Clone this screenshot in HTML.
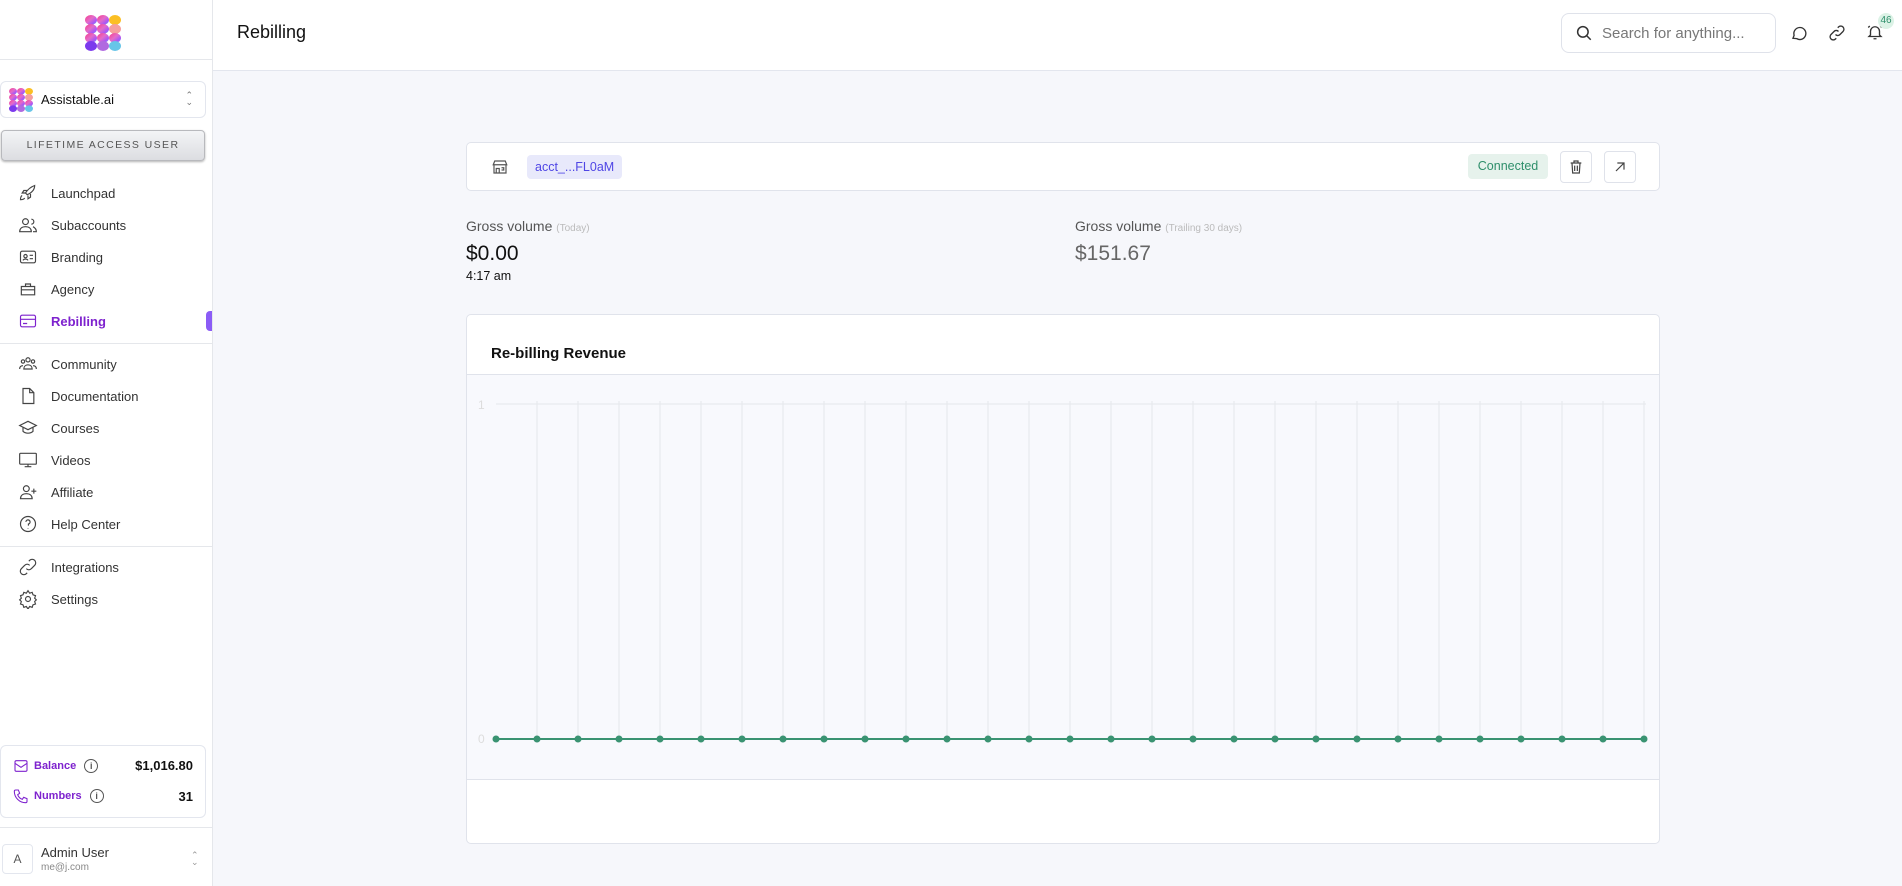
<!DOCTYPE html>
<html><head><meta charset="utf-8"><style>
*{box-sizing:border-box;margin:0;padding:0}
html,body{width:1902px;height:886px;overflow:hidden}
body{font-family:"Liberation Sans",sans-serif;background:#f6f7fb;color:#111;position:relative}
.side{position:absolute;left:0;top:0;width:213px;height:886px;background:#fff;border-right:1px solid #e5e7eb}
.hdr{position:absolute;left:213px;top:0;right:0;height:71px;background:#fff;border-bottom:1px solid #e3e6ee}
.item{position:absolute;left:18px;display:flex;align-items:center;font-size:13px;color:#333}
.item svg{width:20px;height:20px;margin-right:13px;stroke:#444;fill:none;stroke-width:1.4}
.sep{position:absolute;left:0;width:212px;height:1px;background:#e5e7eb}
.abs{position:absolute}
</style></head><body>
<svg width="0" height="0" style="position:absolute"><defs>
<linearGradient id="g" x1="0" y1="0" x2="1" y2="1"><stop offset="0" stop-color="#f43f8e"/><stop offset=".45" stop-color="#e56bc8"/><stop offset=".75" stop-color="#a855f7"/><stop offset="1" stop-color="#67c5e8"/></linearGradient>
<g id="logo"><g fill="url(#g)">
<ellipse cx="6" cy="5" rx="6" ry="5"/><ellipse cx="18" cy="5" rx="6" ry="5"/><ellipse cx="30" cy="5" rx="6" ry="5" fill="#fbbf24"/>
<ellipse cx="6" cy="14" rx="6" ry="5"/><ellipse cx="18" cy="14" rx="6" ry="5"/><ellipse cx="30" cy="14" rx="6" ry="5" fill="#f59e9e"/>
<ellipse cx="6" cy="23" rx="6" ry="5"/><ellipse cx="18" cy="23" rx="6" ry="5"/><ellipse cx="30" cy="23" rx="6" ry="5"/>
<ellipse cx="6" cy="31" rx="6" ry="5" fill="#7c3aed"/><ellipse cx="18" cy="31" rx="6" ry="5" fill="#b06ae0"/><ellipse cx="30" cy="31" rx="6" ry="5" fill="#67c5e8"/></g></g>
</defs></svg>
<div class="side">
 <svg class="abs" style="left:85px;top:15px" width="36" height="36" viewBox="0 0 36 36"><use href="#logo"/></svg>
 <div class="sep" style="top:59px"></div>
 <div class="abs" style="left:0;top:81px;width:206px;height:37px;border:1px solid #e3e6ee;border-radius:6px;display:flex;align-items:center;font-size:13px">
  <svg style="margin:0 8px 0 8px" width="24" height="24" viewBox="0 0 36 36"><use href="#logo"/></svg>
  Assistable.ai<span style="position:absolute;right:12px;top:10px;color:#777;font-size:9px;line-height:7px">⌃<br>⌄</span></div>
 <div class="abs" style="left:1px;top:130px;width:204px;height:31px;border-radius:4px;background:linear-gradient(#f3f4f6,#dcdde1);border:1px solid #b8b9bd;box-shadow:0 1px 2px rgba(0,0,0,.3);font-size:10.5px;letter-spacing:1.4px;color:#555;text-align:center;line-height:29px">LIFETIME ACCESS USER</div>

 <div class="item" style="top:183px"><svg viewBox="0 0 24 24"><path d="M5 15c-2 1-2 5-2 5s4 0 5-2M9 12a22 22 0 0 1 11-9c0 4-2 8-9 11zM9 12l-4 0 2-3h4M12 15v4l3-2v-4"/></svg>Launchpad</div>
 <div class="item" style="top:215px"><svg viewBox="0 0 24 24"><circle cx="9" cy="8" r="3.5"/><path d="M2 20c0-4 3-6 7-6s7 2 7 6zM16 5a3 3 0 1 1 0 6M18 14c2 1 4 3 4 6h-4"/></svg>Subaccounts</div>
 <div class="item" style="top:247px"><svg viewBox="0 0 24 24"><rect x="3" y="5" width="18" height="14" rx="2"/><circle cx="9" cy="11" r="2"/><path d="M6 16c1-2 5-2 6 0M14 10h4M14 14h4"/></svg>Branding</div>
 <div class="item" style="top:279px"><svg viewBox="0 0 24 24"><path d="M4 9h16v10H4zM9 9V6h6v3M4 13h16"/></svg>Agency</div>
 <div class="item" style="top:311px;color:#7e22ce;font-weight:bold"><svg viewBox="0 0 24 24" style="stroke:#7e22ce"><rect x="3" y="5" width="18" height="14" rx="2"/><path d="M3 10h18M6 15h5"/></svg>Rebilling</div>
 <div class="abs" style="left:206px;top:311px;width:6px;height:20px;border-radius:4px 0 0 4px;background:#8b5cf6"></div>
 <div class="sep" style="top:343px"></div>
 <div class="item" style="top:354px"><svg viewBox="0 0 24 24"><circle cx="12" cy="7" r="2.5"/><circle cx="6" cy="9" r="2"/><circle cx="18" cy="9" r="2"/><path d="M7 18c0-3 2-5 5-5s5 2 5 5zM2 18c0-2 1-4 4-4M22 18c0-2-1-4-4-4"/></svg>Community</div>
 <div class="item" style="top:386px"><svg viewBox="0 0 24 24"><path d="M6 3h8l5 5v13H6zM14 3v5h5"/></svg>Documentation</div>
 <div class="item" style="top:418px"><svg viewBox="0 0 24 24"><path d="M2 9l10-5 10 5-10 5zM6 11v5c3 3 9 3 12 0v-5"/></svg>Courses</div>
 <div class="item" style="top:450px"><svg viewBox="0 0 24 24"><rect x="2" y="4" width="20" height="13" rx="1"/><path d="M8 20h8M12 17v3"/></svg>Videos</div>
 <div class="item" style="top:482px"><svg viewBox="0 0 24 24"><circle cx="10" cy="8" r="3.5"/><path d="M3 20c0-4 3-6 7-6s7 2 7 6zM19 8v6M16 11h6"/></svg>Affiliate</div>
 <div class="item" style="top:514px"><svg viewBox="0 0 24 24"><circle cx="12" cy="12" r="9"/><path d="M9.5 9.5a2.5 2.5 0 1 1 3 2.5v2M12 17v.5"/></svg>Help Center</div>
 <div class="sep" style="top:546px"></div>
 <div class="item" style="top:557px"><svg viewBox="0 0 24 24"><path d="M10 14a4 4 0 0 0 6 0l4-4a4 4 0 0 0-6-6l-1 1M14 10a4 4 0 0 0-6 0l-4 4a4 4 0 0 0 6 6l1-1"/></svg>Integrations</div>
 <div class="item" style="top:589px"><svg viewBox="0 0 24 24"><circle cx="12" cy="12" r="3"/><path d="M12 2l2 3 3-1 1 3 3 1-1 3 2 2-2 2 1 3-3 1-1 3-3-1-2 3-2-3-3 1-1-3-3-1 1-3-2-2 2-2-1-3 3-1 1-3 3 1z"/></svg>Settings</div>

 <div class="abs" style="left:0;top:745px;width:206px;height:73px;border:1px solid #e3e6ee;border-radius:6px;font-size:11px;font-weight:bold;color:#7e22ce">
  <div class="abs" style="left:12px;top:12px;display:flex;align-items:center"><svg width="16" height="16" viewBox="0 0 24 24" fill="none" stroke="#7e22ce" stroke-width="1.6" style="margin-right:5px"><rect x="3" y="4" width="18" height="16" rx="2"/><path d="M3 8l9 6 9-6"/></svg>Balance <span style="display:inline-block;width:14px;height:14px;border:1px solid #555;border-radius:50%;color:#555;font-size:9px;text-align:center;line-height:12px;margin-left:8px">i</span></div>
  <div class="abs" style="right:12px;top:12px;color:#111;font-size:13px">$1,016.80</div>
  <div class="abs" style="left:12px;top:42px;display:flex;align-items:center"><svg width="16" height="16" viewBox="0 0 24 24" fill="none" stroke="#7e22ce" stroke-width="1.6" style="margin-right:5px"><path d="M4 3h4l2 5-3 2a11 11 0 0 0 7 7l2-3 5 2v4a2 2 0 0 1-2 2A17 17 0 0 1 2 5a2 2 0 0 1 2-2"/></svg>Numbers <span style="display:inline-block;width:14px;height:14px;border:1px solid #555;border-radius:50%;color:#555;font-size:9px;text-align:center;line-height:12px;margin-left:8px">i</span></div>
  <div class="abs" style="right:12px;top:43px;color:#111;font-size:13px">31</div>
 </div>
 <div class="sep" style="top:827px"></div>
 <div class="abs" style="left:2px;top:844px;width:31px;height:30px;border:1px solid #e3e6ee;border-radius:4px;font-size:12px;color:#555;text-align:center;line-height:28px">A</div>
 <div class="abs" style="left:41px;top:845px;font-size:13px;color:#333">Admin User</div>
 <div class="abs" style="left:41px;top:862px;font-size:10px;color:#888">me@j.com</div>
 <div class="abs" style="left:191px;top:852px;font-size:9px;color:#999;line-height:7px">⌃<br>⌄</div>
</div>

<div class="hdr">
 <div class="abs" style="left:24px;top:22px;font-size:18px;color:#111">Rebilling</div>
 <div class="abs" style="left:1348px;top:13px;width:215px;height:40px;border:1px solid #dfe2ea;border-radius:8px;display:flex;align-items:center;font-size:15px;color:#777">
  <svg width="18" height="18" viewBox="0 0 24 24" fill="none" stroke="#333" stroke-width="2" style="margin:0 9px 0 13px"><circle cx="10.5" cy="10.5" r="7"/><path d="M16 16l5 5"/></svg>Search for anything...</div>
 <svg class="abs" style="left:1577px;top:24px" width="18" height="18" viewBox="0 0 24 24" fill="none" stroke="#333" stroke-width="1.8"><path d="M4 19l1.5-4A8 8 0 1 1 9 19.5z"/></svg>
 <svg class="abs" style="left:1615px;top:24px" width="18" height="18" viewBox="0 0 24 24" fill="none" stroke="#333" stroke-width="1.8"><path d="M10 14a4 4 0 0 0 6 0l4-4a4 4 0 0 0-6-6l-1 1M14 10a4 4 0 0 0-6 0l-4 4a4 4 0 0 0 6 6l1-1"/></svg>
 <svg class="abs" style="left:1653px;top:23px" width="18" height="18" viewBox="0 0 24 24" fill="none" stroke="#333" stroke-width="1.8"><path d="M6 16V11a6 6 0 0 1 12 0v5l2 2H4zM10 21h4M3 6l2-2M21 6l-2-2"/></svg>
 <div class="abs" style="left:1665px;top:13px;width:16px;height:16px;border-radius:50%;background:#dcf2e6;color:#2f8f6b;font-size:10px;text-align:center;line-height:16px">46</div>
</div>

<div class="abs" style="left:466px;top:142px;width:1194px;height:49px;background:#fff;border:1px solid #e0e3eb;border-radius:5px">
 <svg class="abs" style="left:24px;top:15px" width="18" height="18" viewBox="0 0 24 24" fill="none" stroke="#555" stroke-width="1.6"><path d="M3 9l2-5h14l2 5zM4 9v11h16V9M7 20v-6h4v6M14 13h3v3h-3"/></svg>
 <div class="abs" style="left:60px;top:12px;height:24px;padding:0 8px;background:#e8e9fb;border-radius:4px;color:#4f46e5;font-size:12.5px;line-height:24px">acct_...FL0aM</div>
 <div class="abs" style="left:1001px;top:11px;width:80px;height:25px;background:#e6f2ec;border-radius:4px;color:#2f8f6b;font-size:12.5px;text-align:center;line-height:25px">Connected</div>
 <div class="abs" style="left:1093px;top:8px;width:32px;height:32px;border:1px solid #dfe2ea;border-radius:4px"><svg style="margin:7px" width="16" height="16" viewBox="0 0 24 24" fill="none" stroke="#444" stroke-width="1.8"><path d="M4 6h16M9 6V3h6v3M6 6l1 15h10l1-15M10 10v8M14 10v8"/></svg></div>
 <div class="abs" style="left:1137px;top:8px;width:32px;height:32px;border:1px solid #dfe2ea;border-radius:4px"><svg style="margin:7px" width="16" height="16" viewBox="0 0 24 24" fill="none" stroke="#444" stroke-width="1.8"><path d="M6 18L18 6M8 6h10v10"/></svg></div>
</div>

<div class="abs" style="left:466px;top:218px;font-size:14px;color:#555">Gross volume <span style="font-size:10px;color:#bbb">(Today)</span></div>
<div class="abs" style="left:466px;top:242px;font-size:21px;color:#111">$0.00</div>
<div class="abs" style="left:466px;top:269px;font-size:12.5px;color:#111">4:17 am</div>
<div class="abs" style="left:1075px;top:218px;font-size:14px;color:#555">Gross volume <span style="font-size:10px;color:#bbb">(Trailing 30 days)</span></div>
<div class="abs" style="left:1075px;top:242px;font-size:21px;color:#666">$151.67</div>

<div class="abs" style="left:466px;top:314px;width:1194px;height:530px;background:#fff;border:1px solid #e0e3eb;border-radius:5px;overflow:hidden">
 <div class="abs" style="left:24px;top:30px;font-size:15px;font-weight:bold;color:#111">Re-billing Revenue</div>
 <div class="abs" style="left:0;top:59px;width:1194px;height:406px;background:#f8f9fd;border-top:1px solid #e0e3eb;border-bottom:1px solid #e0e3eb"></div>
</div>
<svg class="abs" style="left:0;top:0" width="1902" height="886">
 <text x="478" y="409" font-size="12" fill="#ddd" font-family="Liberation Sans">1</text>
 <text x="478" y="743" font-size="12" fill="#ddd" font-family="Liberation Sans">0</text>
 <line x1="496" y1="404" x2="1646" y2="404" stroke="#e5e7eb"/>
 <g stroke="#e5e7eb" id="vg"></g>
 <line x1="496" y1="739" x2="1644" y2="739" stroke="#3a9372" stroke-width="2"/>
 <g id="dots" fill="#3a9372"></g>
</svg>
<script>
var vg=document.getElementById('vg'),d=document.getElementById('dots'),s='',t='';
for(var i=0;i<29;i++){var x=496+i*41;if(i>0)s+='<line x1="'+x+'" y1="401" x2="'+x+'" y2="739"/>';t+='<circle cx="'+x+'" cy="739" r="3.5"/>';}
vg.innerHTML=s;d.innerHTML=t;
</script>
</body></html>
